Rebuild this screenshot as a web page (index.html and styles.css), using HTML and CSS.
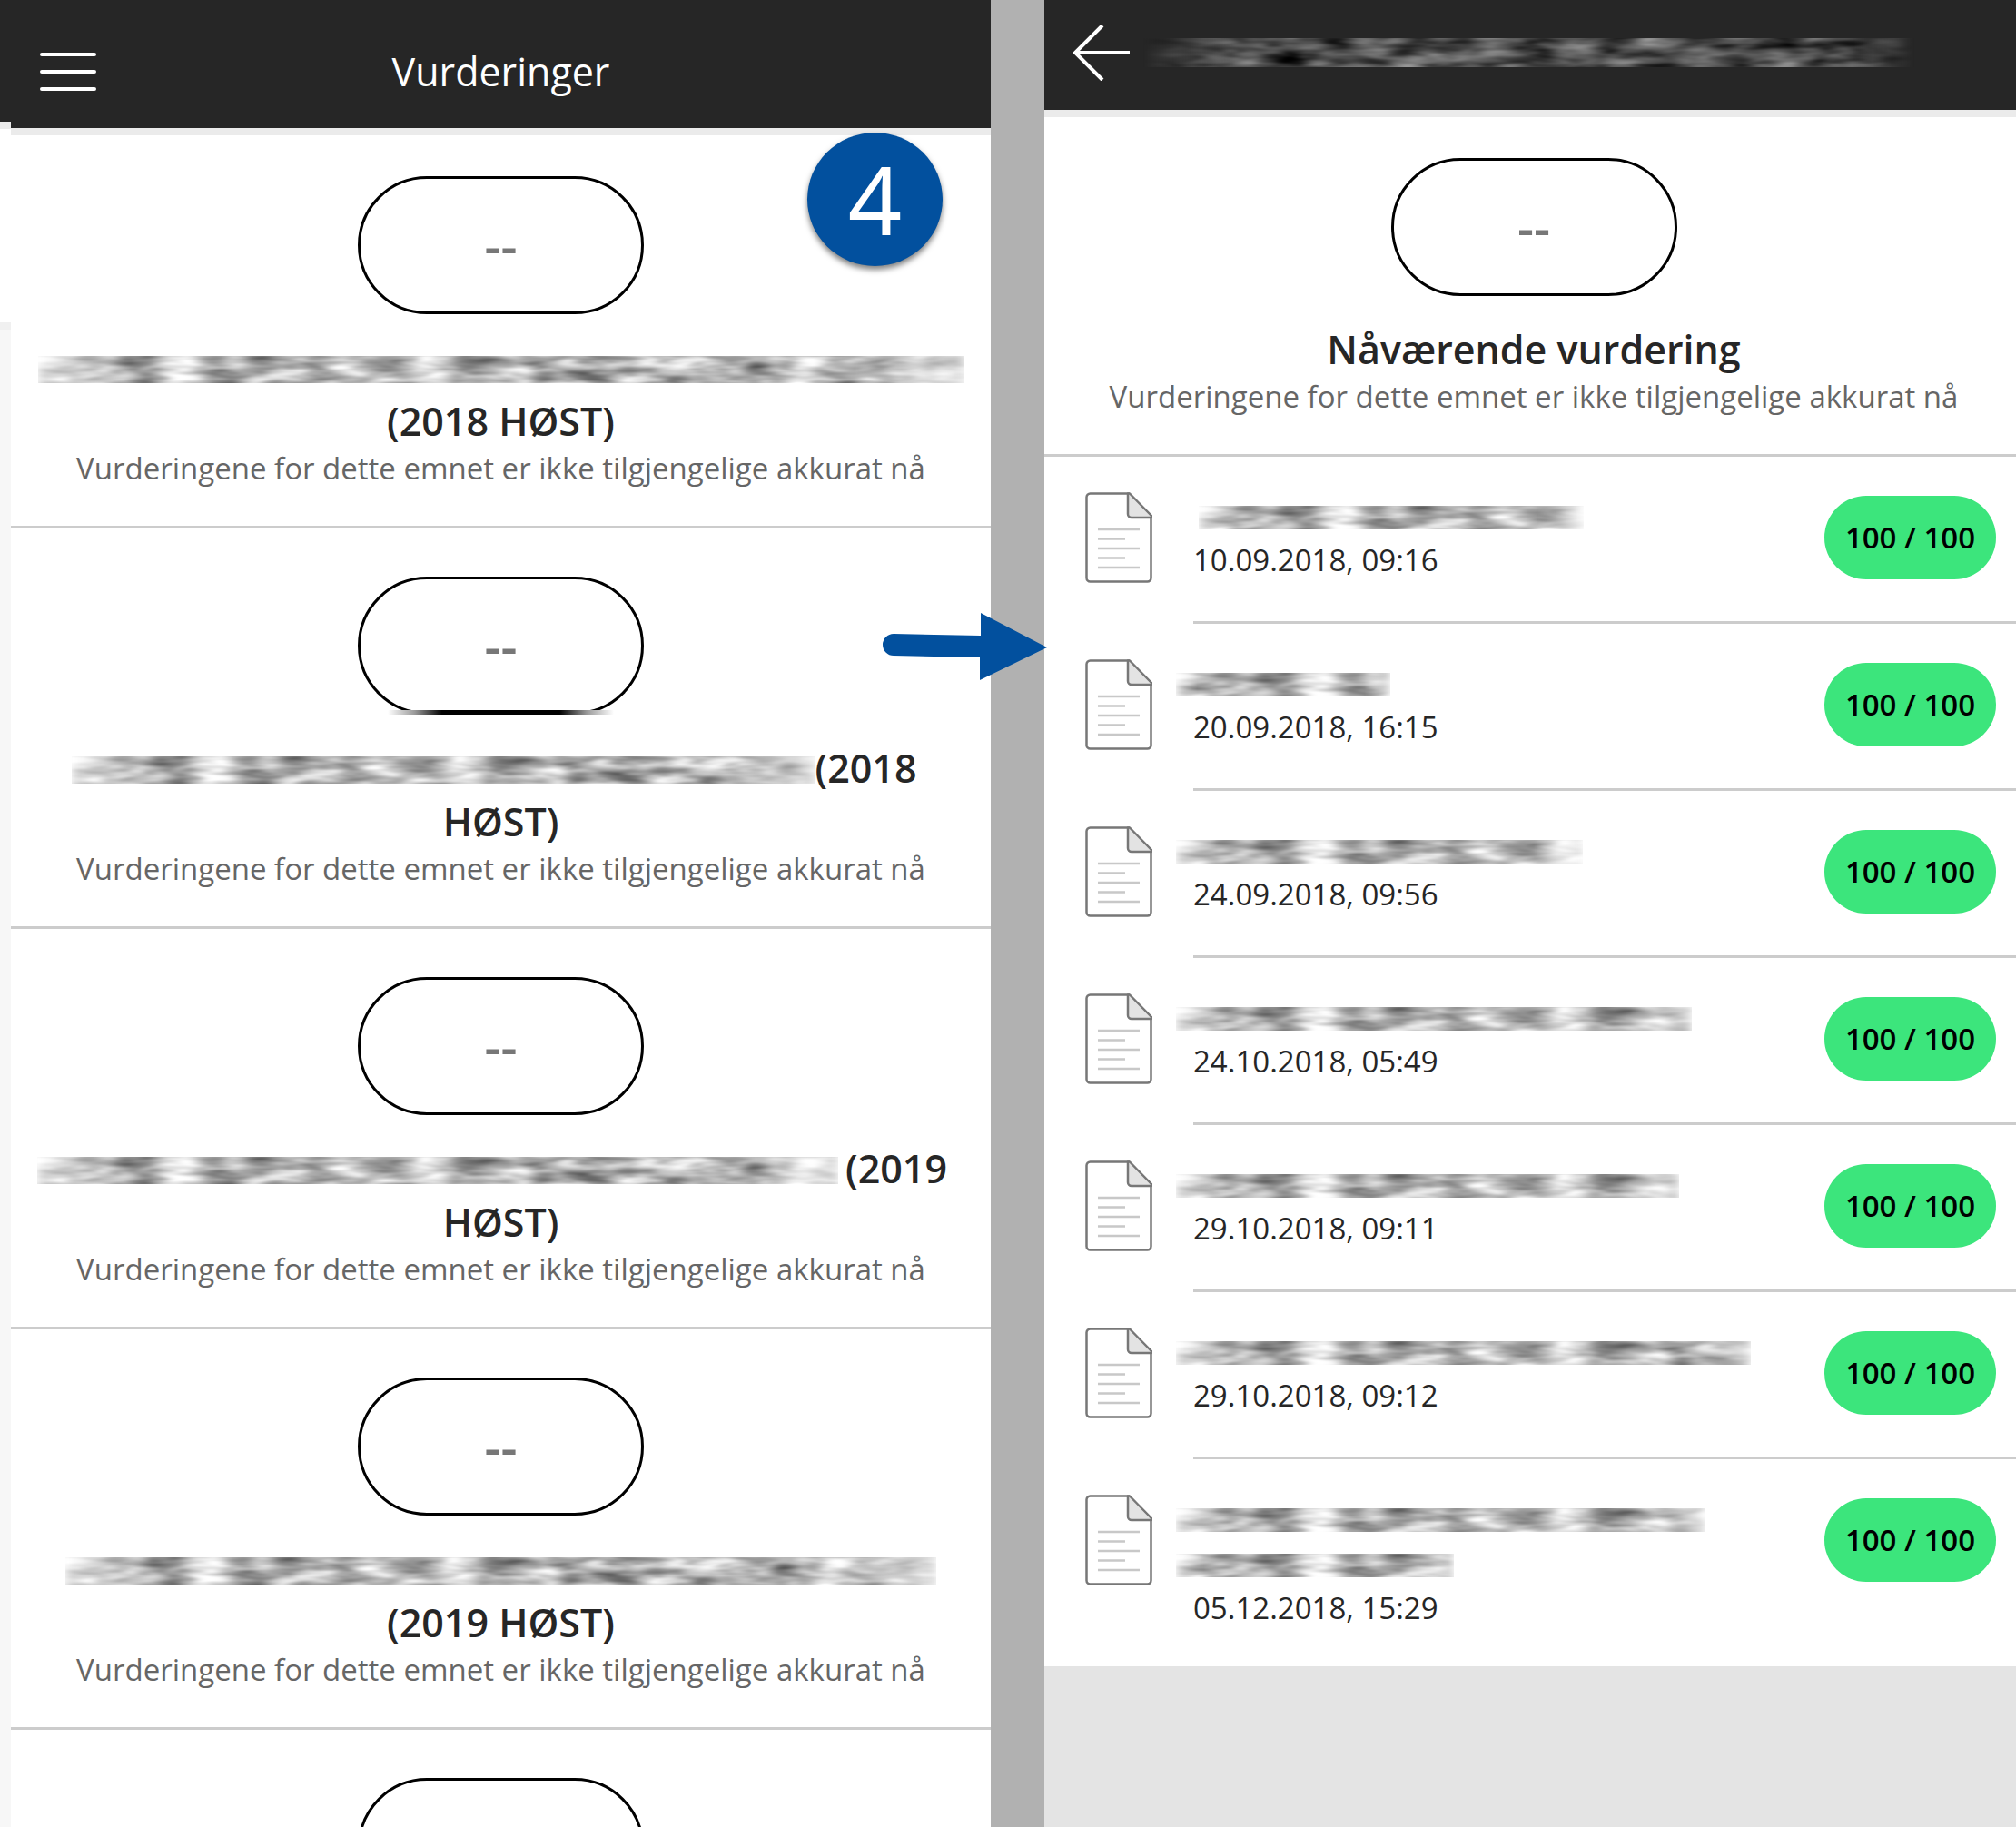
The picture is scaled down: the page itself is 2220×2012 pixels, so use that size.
FILE: index.html
```
<!DOCTYPE html>
<html lang="nb">
<head>
    <meta charset="UTF-8"/>
    <meta name="viewport" content="width=device-width, initial-scale=1.0">
    <title>Vurderinger</title>
    <link rel="stylesheet" href="styles.css">
</head>
<body>
    <!-- shared drawings -->
    <svg class="defs" width="0" height="0" aria-hidden="true">
        <filter id="smear" x="0" y="0" width="100%" height="100%" color-interpolation-filters="sRGB">
            <feTurbulence type="fractalNoise" baseFrequency="0.022 0.07" numOctaves="3" seed="4"/>
            <feColorMatrix values="1.1 0 0 0 0.16  1.1 0 0 0 0.16  1.1 0 0 0 0.16  0 0 0 0 1"/>
            <feGaussianBlur stdDeviation="5 0"/>
            <feComposite operator="in" in2="SourceGraphic"/>
        </filter>
        <filter id="smear-dark" x="0" y="0" width="100%" height="100%" color-interpolation-filters="sRGB">
            <feTurbulence type="fractalNoise" baseFrequency="0.022 0.07" numOctaves="3" seed="9"/>
            <feColorMatrix values="0.9 0 0 0 -0.14  0.9 0 0 0 -0.14  0.9 0 0 0 -0.14  0 0 0 0 1"/>
            <feGaussianBlur stdDeviation="5 0"/>
            <feComposite operator="in" in2="SourceGraphic"/>
        </filter>
        <symbol id="doc" viewBox="0 0 74 100">
            <path d="M48 1.500H5.500a4 4 0 0 0-4 4v89a4 4 0 0 0 4 4h63a4 4 0 0 0 4-4V26z" fill="#fff" stroke="#777" stroke-width="2.500"/>
            <path d="M47 1.500V24a4 4 0 0 0 4 4h22v-2L49 1.500z" fill="#e3e3e3" stroke="#777" stroke-width="2.500" stroke-linejoin="round"/>
            <path d="M14 41h46M14 51.500h30M14 62h46M14 72.500h30M14 83h46" stroke="#c8c8c8" stroke-width="2.500"/>
        </symbol>
    </svg>

    <div class="gutter"></div>

    <main class="panel overview">
        <header class="topbar">
            <button class="icon-button" aria-label="Meny">
                <svg width="62" height="42" viewBox="0 0 62 42" fill="none" stroke="#fff" stroke-width="4" stroke-linecap="round">
                    <path d="M2 2h58M2 21h58M2 40h58"/>
                </svg>
            </button>
            <h1>Vurderinger</h1>
        </header>

        <section class="card">
            <div class="grade">--</div>
            <h2><span class="smudge course-1"></span><br>(2018 HØST)</h2>
            <p>Vurderingene for dette emnet er ikke tilgjengelige akkurat nå</p>
        </section>
        <section class="card">
            <div class="grade grade-smeared">--</div>
            <h2><span class="smudge course-2"></span>(2018<br>HØST)</h2>
            <p>Vurderingene for dette emnet er ikke tilgjengelige akkurat nå</p>
        </section>
        <section class="card">
            <div class="grade">--</div>
            <h2><span class="smudge course-3"></span>(2019<br>HØST)</h2>
            <p>Vurderingene for dette emnet er ikke tilgjengelige akkurat nå</p>
        </section>
        <section class="card">
            <div class="grade">--</div>
            <h2><span class="smudge course-4"></span><br>(2019 HØST)</h2>
            <p>Vurderingene for dette emnet er ikke tilgjengelige akkurat nå</p>
        </section>
        <section class="card">
            <div class="grade"></div>
        </section>

        <div class="step">4</div>
        <svg class="pointer" width="183" height="76" viewBox="0 0 183 76" aria-hidden="true">
            <path d="M13 24L109 26V1L182 39L108 75V50L13 48A12 12 0 0 1 13 24z" fill="#02509e"/>
        </svg>
    </main>

    <div class="divider"></div>

    <section class="panel course">
        <header class="topbar topbar-course">
            <button class="icon-button" aria-label="Tilbake">
                <svg width="62" height="62" viewBox="0 0 62 62" fill="none" stroke="#fff" stroke-width="4">
                    <path d="M62 31H2M32 1L2 31l30 30"/>
                </svg>
            </button>
            <span class="smudge smudge-dark"></span>
        </header>

        <div class="card current">
            <div class="grade">--</div>
            <h2>Nåværende vurdering</h2>
            <p>Vurderingene for dette emnet er ikke tilgjengelige akkurat nå</p>
        </div>

        <ul class="items">
            <li>
                <svg class="doc"><use href="#doc"/></svg>
                <div class="item">
                    <div class="text">
                        <div class="name"><span class="smudge item-1"></span></div>
                        <time>10.09.2018, 09:16</time>
                    </div>
                    <span class="score">100 / 100</span>
                </div>
            </li>
            <li>
                <svg class="doc"><use href="#doc"/></svg>
                <div class="item">
                    <div class="text">
                        <div class="name"><span class="smudge item-2"></span></div>
                        <time>20.09.2018, 16:15</time>
                    </div>
                    <span class="score">100 / 100</span>
                </div>
            </li>
            <li>
                <svg class="doc"><use href="#doc"/></svg>
                <div class="item">
                    <div class="text">
                        <div class="name"><span class="smudge item-3"></span></div>
                        <time>24.09.2018, 09:56</time>
                    </div>
                    <span class="score">100 / 100</span>
                </div>
            </li>
            <li>
                <svg class="doc"><use href="#doc"/></svg>
                <div class="item">
                    <div class="text">
                        <div class="name"><span class="smudge item-4"></span></div>
                        <time>24.10.2018, 05:49</time>
                    </div>
                    <span class="score">100 / 100</span>
                </div>
            </li>
            <li>
                <svg class="doc"><use href="#doc"/></svg>
                <div class="item">
                    <div class="text">
                        <div class="name"><span class="smudge item-5"></span></div>
                        <time>29.10.2018, 09:11</time>
                    </div>
                    <span class="score">100 / 100</span>
                </div>
            </li>
            <li>
                <svg class="doc"><use href="#doc"/></svg>
                <div class="item">
                    <div class="text">
                        <div class="name"><span class="smudge item-6"></span></div>
                        <time>29.10.2018, 09:12</time>
                    </div>
                    <span class="score">100 / 100</span>
                </div>
            </li>
            <li>
                <svg class="doc"><use href="#doc"/></svg>
                <div class="item">
                    <div class="text">
                        <div class="name"><span class="smudge item-7"></span></div>
                        <div class="name"><span class="smudge item-8"></span></div>
                        <time>05.12.2018, 15:29</time>
                    </div>
                    <span class="score">100 / 100</span>
                </div>
            </li>
        </ul>
    </section>
</body>
</html>
```
FILE: styles.css
```
* {
    margin: 0;
    padding: 0;
    box-sizing: border-box;
}
body {
    display: flex;
    height: 100vh;
    overflow: hidden;
    font-family: "Open Sans", "Noto Sans", sans-serif;
    font-size: 33px;
    color: #262626;
    background-color: #fff;
}
.defs {
    position: absolute;
}
.gutter {
    width: 12px;
    background: linear-gradient(#262626 134px, #ebebeb 134px, #ebebeb 142px, #fff 142px, #fff 355px, #f0f0f0 355px, #f0f0f0 363px, #f7f7f7 363px);
}
.divider {
    width: 59px;
    background-color: #b1b1b1;
}
.panel {
    min-width: 0;
    background-color: #fff;
}
.overview {
    position: relative;
    flex: 1079 1 0;
}
.course {
    flex: 1070 1 0;
    background-color: #e4e4e4;
}

/* top bars */
.topbar {
    position: relative;
    display: grid;
    grid-template-columns: 1fr auto 1fr;
    align-items: center;
    padding: 49px 32px 33px;
    background-color: #262626;
    box-shadow: 0 8px #ebebeb;
}
.topbar h1 {
    font-size: 43px;
    line-height: 59px;
    font-weight: 400;
    color: #fff;
}
.topbar-course {
    display: flex;
    gap: 15px;
    padding: 27px 112px 32px 32px;
}
.icon-button {
    display: flex;
    background: none;
    border: none;
    cursor: pointer;
}

/* course cards */
.card {
    padding: 53px 24px 40px;
    border-bottom: 3px solid #ccc;
    background-color: #fff;
    text-align: center;
}
.current {
    padding-left: 32px;
}
.grade {
    position: relative;
    width: 315px;
    height: 152px;
    margin: 0 auto 29px;
    border: 3px solid #000;
    border-radius: 76px;
    font-size: 56px;
    line-height: 144px;
    font-weight: 600;
    color: #777;
}
.grade-smeared::after {
    content: "";
    position: absolute;
    left: 30px;
    right: 30px;
    bottom: -3px;
    height: 5px;
    background: linear-gradient(90deg, #fff, #999 12%, #000 24%, #000 76%, #999 88%, #fff);
}
.card h2 {
    font-size: 43px;
    line-height: 59px;
    font-weight: 600;
    white-space: nowrap;
}
.card p {
    line-height: 46px;
    color: #666;
    white-space: nowrap;
}

/* blurred-out names */
.smudge {
    display: inline-block;
    height: 30px;
    background-color: #bbb;
    filter: url(#smear);
    vertical-align: -1px;
    -webkit-mask-image: linear-gradient(90deg, rgba(0, 0, 0, 0.4), #000 10%, #000 88%, rgba(0, 0, 0, 0.4));
    mask-image: linear-gradient(90deg, rgba(0, 0, 0, 0.4), #000 10%, #000 88%, rgba(0, 0, 0, 0.4));
}
.smudge-dark {
    flex: 1;
    height: 32px;
    filter: url(#smear-dark);
    -webkit-mask-image: linear-gradient(90deg, transparent, #000 12%, #000 92%, transparent);
    mask-image: linear-gradient(90deg, transparent, #000 12%, #000 92%, transparent);
}
.course-1 {
    width: 1020px;
}
.course-2 {
    width: 819px;
    margin-left: -15px;
}
.course-3 {
    width: 882px;
    margin-left: -19px;
    margin-right: 8px;
}
.course-4 {
    width: 959px;
}

/* graded items */
.items {
    list-style: none;
    background-color: #fff;
}
.items li {
    display: flex;
    padding-left: 45px;
}
.doc {
    width: 74px;
    height: 100px;
    margin: 39px 45px 0 0;
}
.item {
    display: flex;
    flex: 1;
    align-items: flex-start;
    justify-content: space-between;
    padding: 40px 22px 43px 0;
    border-bottom: 3px solid #ccc;
}
.items li:last-child .item {
    padding-bottom: 40px;
    border-bottom: none;
}
.name {
    height: 50px;
    padding-top: 14px;
    line-height: 0;
}
.name .smudge {
    height: 26px;
    margin-left: -19px;
    vertical-align: top;
}
time {
    display: block;
    line-height: 48px;
}
.score {
    margin-top: 3px;
    width: 189px;
    border-radius: 46px;
    background-color: #3ce57c;
    color: #000;
    font-weight: 600;
    line-height: 92px;
    text-align: center;
}
.name .item-1 {
    width: 424px;
    margin-left: 6px;
}
.item-2 {
    width: 236px;
}
.item-3 {
    width: 448px;
}
.item-4 {
    width: 568px;
}
.item-5 {
    width: 554px;
}
.item-6 {
    width: 633px;
}
.item-7 {
    width: 582px;
}
.item-8 {
    width: 306px;
}

/* guide marks laid over the screens */
.step {
    position: absolute;
    top: 146px;
    right: 53px;
    width: 149px;
    height: 147px;
    border-radius: 50%;
    background-color: #02509e;
    box-shadow: 0 4px 6px rgba(0, 0, 0, 0.5);
    color: #fff;
    font-family: "Noto Sans", sans-serif;
    font-size: 104px;
    line-height: 145px;
    text-align: center;
}
.pointer {
    position: absolute;
    top: 674px;
    right: -63px;
    z-index: 1;
}
```
